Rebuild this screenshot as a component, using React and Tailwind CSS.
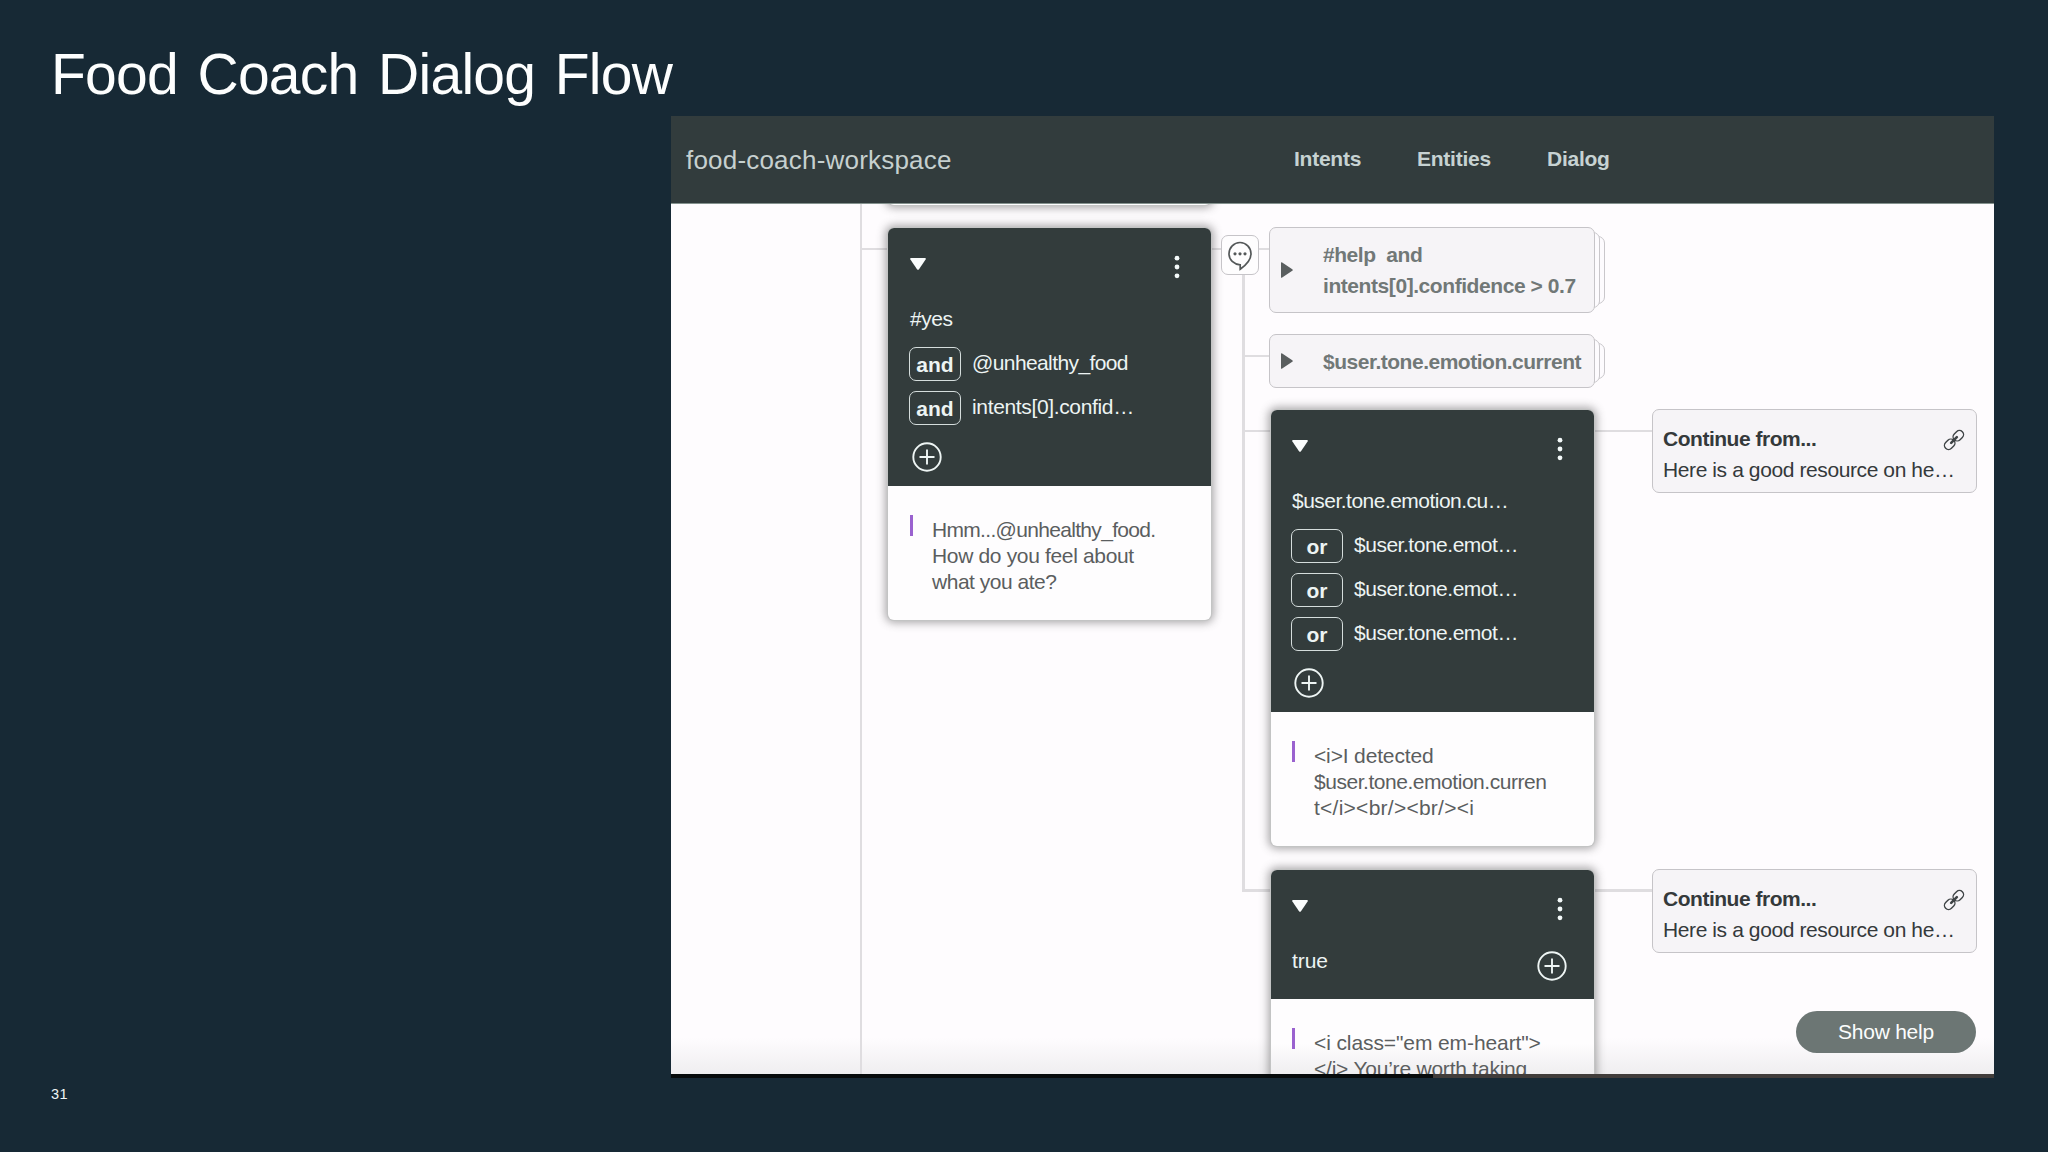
function Kebab() {
  return (
    <svg className="mr-[31.5px] h-[24px] w-[6px] fill-[#f4fafa]" viewBox="0 0 6 24">
      <circle cx="3" cy="3.2" r="2.4" />
      <circle cx="3" cy="12" r="2.4" />
      <circle cx="3" cy="20.8" r="2.4" />
    </svg>
  );
}

function Plus() {
  return (
    <svg className="size-[30px] shrink-0" viewBox="0 0 30 30" fill="none" stroke="#eef5f4" strokeWidth="1.9">
      <circle cx="15" cy="15" r="13.7" />
      <path d="M15 7.5v15M7.5 15h15" />
    </svg>
  );
}

function Link() {
  return (
    <svg className="mt-[6px] size-[22px] shrink-0" viewBox="0 0 22 22" fill="none" stroke="#3f4446" strokeWidth="1.4" strokeLinecap="round">
      <g transform="rotate(-45 11 11)">
        <rect x="-0.8" y="6.9" width="11.4" height="8.2" rx="4.1" />
        <rect x="11.400" y="6.9" width="11.4" height="8.2" rx="4.1" />
        <path d="M7 11h8" strokeWidth="2.6" />
      </g>
    </svg>
  );
}

function Toolbar() {
  return (
    <div className="flex h-[69px] items-start justify-between pt-[27px]">
      <svg className="mt-[3px] h-[12px] w-[16px] fill-[#fbfdfd]" viewBox="0 0 16 12">
        <path d="M1.2 0h13.6q1.6 0 .8 1.4L9 11.2q-1 1.3-2 0L.4 1.4Q-.4 0 1.2 0Z" />
      </svg>
      <Kebab />
    </div>
  );
}

function Condition({ op, text, className }) {
  return (
    <div className="-ml-px flex h-[44px] items-center">
      <div className="mt-px flex h-[34px] w-[52px] shrink-0 items-center justify-center rounded-[7px] border-[1.5px] border-[#d5dddc] pt-[2px]">
        <span className="font-bold">{op}</span>
      </div>
      <span className={`ml-[11px] whitespace-nowrap ${className}`}>{text}</span>
    </div>
  );
}

function Node({ className, headClass, padClass, children, lines, bodyClass }) {
  return (
    <div className={`w-[323px] shrink-0 overflow-hidden rounded-[6px] bg-[#fefdfe] shadow-[0_0_0_1px_#c3c4c4,0_0_8px_3px_rgba(60,60,60,0.42)] ${className}`}>
      <div className={`bg-[#333c3c] text-[21px] leading-[44px] text-[#edf4f3] ${padClass} ${headClass}`}>
        <Toolbar />
        {children}
      </div>
      <div className={`flex ${padClass} ${bodyClass}`}>
        <div className="mt-[29px] h-[21px] w-[3px] bg-[#9a62cf]" />
        <div className="ml-[19px] pt-[31px] text-[21px] leading-[26px] text-[#5b5e5f]">
          {lines.map(([t, c]) => (
            <div key={t} className={`whitespace-nowrap ${c}`}>{t}</div>
          ))}
        </div>
      </div>
    </div>
  );
}

function Collapsed({ className, children }) {
  return (
    <div className={`relative w-[336px] ${className}`}>
      <div className="absolute inset-y-[9px] right-0 w-[30px] rounded-[7px] border border-[#c9c7cb] bg-[#fdfbfe]" />
      <div className="absolute inset-y-[5px] right-[5px] w-[30px] rounded-[7px] border border-[#c9c7cb] bg-[#fdfbfe]" />
      <div className="relative flex h-full w-[326px] items-center rounded-[7px] border-[1.5px] border-[#c6c4c8] bg-[#f6f4f7] pl-[11px]">
        <svg className="h-[16px] w-[12px] shrink-0 fill-[#5a5e5f]" viewBox="0 0 12 16">
          <path d="M0 1Q0-.4 1.2.5L11.3 7.2q1 .8 0 1.6L1.2 15.5Q0 16.4 0 15Z" />
        </svg>
        <div className="ml-[30px] whitespace-pre text-[21px] leading-[31px] font-bold text-[#717877]">{children}</div>
      </div>
    </div>
  );
}

function Continue() {
  return (
    <div className="flex h-[84px] w-[325px] justify-between rounded-[7px] border-[1.5px] border-[#c6c4c8] bg-[#f6f4f7] pt-[12.500px] pr-[11px] pl-[10px] text-[21px] leading-[31px] text-[#34393b]">
      <div className="w-[270px] whitespace-nowrap">
        <div className="font-bold tracking-[-0.48px]">Continue from...</div>
        <div className="tracking-[-0.4px]">Here is a good resource on he…</div>
      </div>
      <Link />
    </div>
  );
}

const wire = "absolute bg-[#dfdde0]";

export default function App() {
  return (
    <div className="flex h-[1152px] w-[2048px] flex-col overflow-hidden bg-[#172935] font-['Liberation_Sans',sans-serif]">
      <h1 className="h-[116px] pt-[42px] pl-[51px] text-[57px] leading-[64px] tracking-[-0.75px] text-[#fdfefe] [word-spacing:4.5px]">
        Food Coach Dialog Flow
      </h1>

      <div className="ml-[671px] w-[1323px]">
        <header className="relative z-10 -mb-px grid h-[88px] grid-cols-[623px_1fr] border-b border-[#84928e] bg-[#323c3d]">
          <div className="pt-[29px] pl-[15px] text-[26px] leading-[30px] tracking-[0.2px] text-[#c6d0cf]">food-coach-workspace</div>
          <nav className="flex pt-[30px] text-[21px] leading-[26px] font-bold tracking-[-0.25px] text-[#c6d2d2]">
            <span className="w-[123px]">Intents</span>
            <span className="w-[130px]">Entities</span>
            <span>Dialog</span>
          </nav>
        </header>

        <main className="relative flex h-[871px] items-start overflow-hidden bg-[#fefcfe]">
          <div className="absolute inset-x-0 bottom-0 h-[36px] bg-linear-to-b from-[#fefcfe] to-[#efeef0]" />
          <div className={`${wire} top-0 left-[189px] h-[871px] w-[2px]`} />
          <div className={`${wire} top-[45px] left-[191px] h-[2px] w-[26px]`} />
          <div className={`${wire} top-[45px] left-[540px] h-[2px] w-[60px]`} />
          <div className={`${wire} top-[72px] left-[571px] h-[617px] w-[3px]`} />
          <div className={`${wire} top-[152px] left-[574px] h-[2px] w-[26px]`} />
          <div className={`${wire} top-[227px] left-[574px] h-[2px] w-[26px]`} />
          <div className={`${wire} top-[686px] left-[574px] h-[3px] w-[26px]`} />
          <div className={`${wire} top-[227px] left-[923px] h-[2px] w-[60px]`} />
          <div className={`${wire} top-[686px] left-[923px] h-[3px] w-[60px]`} />

          <section className="relative -mt-[20px] ml-[217px] flex flex-col gap-[23px]">
            <div className="h-[22px] w-[323px] rounded-[6px] bg-[#fefdfe] shadow-[0_0_0_1px_#c3c4c4,0_0_8px_3px_rgba(60,60,60,0.42)]" />
            <Node
              className="h-[392px]"
              headClass="h-[258px]"
              padClass="pl-[22px]"
              lines={[
                ["Hmm...@unhealthy_food.", "tracking-[-0.68px]"],
                ["How do you feel about", "tracking-[-0.34px]"],
                ["what you ate?", "tracking-[-0.48px]"],
              ]}
            >
              <div className="tracking-[-0.45px]">#yes</div>
              <Condition op="and" text="@unhealthy_food" className="tracking-[-0.6px]" />
              <Condition op="and" text="intents[0].confid…" className="tracking-[-0.35px]" />
              <div className="pt-[13px] pl-[2px]"><Plus /></div>
            </Node>
          </section>

          <div className="relative mt-[32px] ml-[10px] flex h-[40px] w-[38px] items-center justify-center rounded-[7px] border-[1.5px] border-[#c6c4c8] bg-[#fefdfe]">
            <svg className="mt-px h-[30px] w-[26px]" viewBox="0 0 26 30" fill="none" stroke="#545859" strokeWidth="1.7">
              <path d="M13 1.5A11 11.200 0 0 0 2 12.700C2 19 6.800 23.300 13.200 23.800V28.200C18.500 24.500 24 19.500 24 12.700A11 11.200 0 0 0 13 1.500Z" />
              <g fill="#545859" stroke="none">
                <circle cx="8" cy="12.800" r="1.600" />
                <circle cx="13" cy="12.800" r="1.600" />
                <circle cx="18" cy="12.800" r="1.600" />
              </g>
            </svg>
          </div>

          <section className="relative mt-[24px] ml-[10px] flex flex-col">
            <Collapsed className="mb-[21px] h-[86px]">
              <div className="tracking-[-0.45px]">{"#help  and"}</div>
              <div className="tracking-[-0.43px]">{"intents[0].confidence > 0.7"}</div>
            </Collapsed>
            <Collapsed className="mb-[22px] h-[54px]">
              <div className="tracking-[-0.49px]">$user.tone.emotion.current</div>
            </Collapsed>

            <Node
              className="mb-[24px] ml-[2px] h-[436px]"
              headClass="h-[302px]"
              padClass="pl-[21px]"
              lines={[
                ["<i>I detected", "tracking-[-0.15px]"],
                ["$user.tone.emotion.curren", "tracking-[-0.46px]"],
                ["t</i><br/><br/><i", "tracking-[0.25px]"],
              ]}
            >
              <div className="tracking-[-0.52px]">$user.tone.emotion.cu…</div>
              <Condition op="or" text="$user.tone.emot…" className="tracking-[-0.48px]" />
              <Condition op="or" text="$user.tone.emot…" className="tracking-[-0.48px]" />
              <Condition op="or" text="$user.tone.emot…" className="tracking-[-0.48px]" />
              <div className="pt-[13px] pl-[2px]"><Plus /></div>
            </Node>

            <Node
              className="ml-[2px] h-[260px]"
              headClass="h-[129px]"
              padClass="pl-[21px]"
              bodyClass="bg-linear-to-b from-[#fefdfe] from-[44px] to-[#efeef0] to-[76px]"
              lines={[
                ['<i class="em em-heart">', "tracking-[-0.1px]"],
                ["</i> You’re worth taking", "tracking-[-0.22px]"],
              ]}
            >
              <div className="flex justify-between pr-[27px]">
                <span className="tracking-[-0.05px]">true</span>
                <div className="pt-[12px]"><Plus /></div>
              </div>
            </Node>
          </section>

          <section className="relative mt-[206px] ml-[47px] flex flex-col gap-[376px]">
            <Continue />
            <Continue />
          </section>

          <button className="absolute right-[18px] bottom-[21px] h-[42px] w-[180px] rounded-full bg-[#6c7674] text-[21px] leading-[40px] tracking-[-0.25px] text-[#fbfdfd]">
            Show help
          </button>
        </main>

        <div className="flex h-[4px] bg-[#413d3b]">
          <div className="w-[762px] bg-[#070b0c]" />
        </div>
      </div>

      <div className="pt-[7px] pl-[51px] text-[14.5px] leading-[18px] tracking-[0.43px] text-[#f0f5f6]">31</div>
    </div>
  );
}
